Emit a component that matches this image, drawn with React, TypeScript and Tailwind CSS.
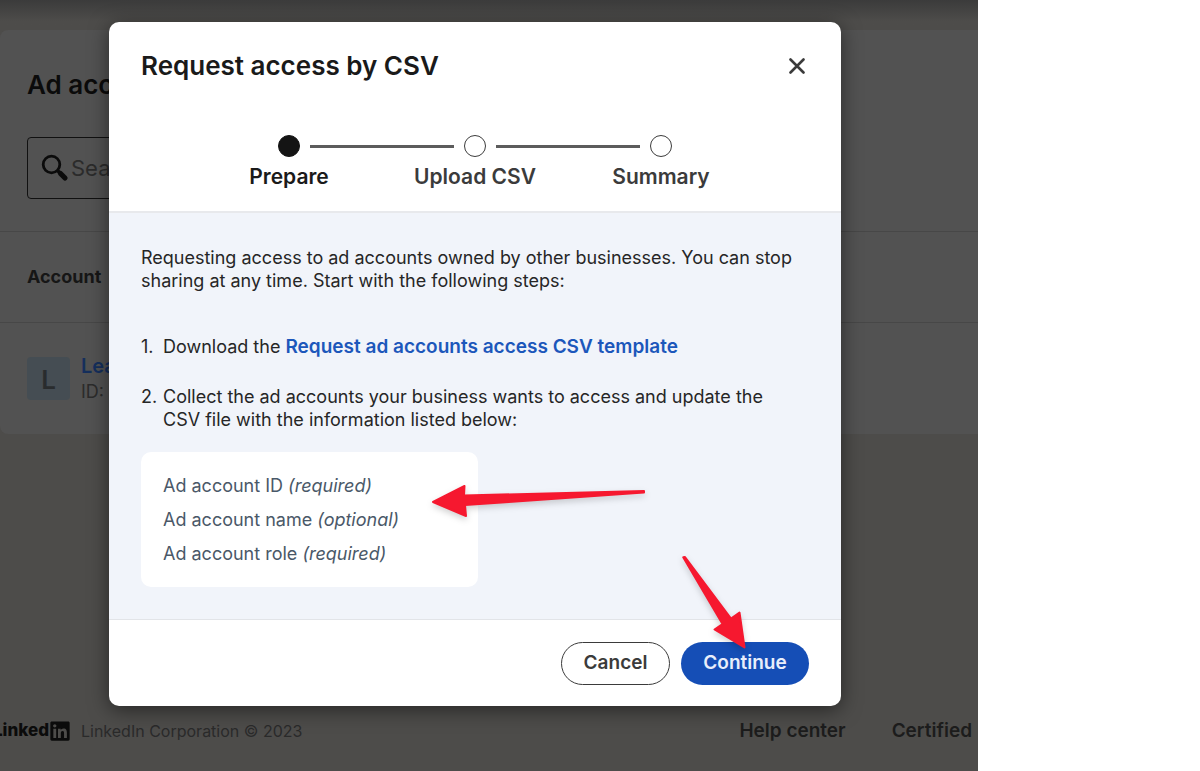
import { FaLinkedin } from 'react-icons/fa';

const STEPS = [
  { label: 'Prepare', active: true },
  { label: 'Upload CSV', active: false },
  { label: 'Summary', active: false },
];

const CSV_FIELDS = [
  { name: 'Ad account ID', note: '(required)' },
  { name: 'Ad account name', note: '(optional)' },
  { name: 'Ad account role', note: '(required)' },
];

function SearchIcon() {
  return (
    <svg className="h-7 w-7 shrink-0" viewBox="0 0 28 28" fill="none" stroke="#0b0b0b" strokeLinecap="round" aria-hidden="true">
      <circle cx="10.5" cy="10.5" r="8.3" strokeWidth="2.8" />
      <path d="M17 17l2 2" strokeWidth="3.5" />
      <path d="M19.5 19.5l4.5 4.5" strokeWidth="5.2" />
    </svg>
  );
}

function AccountsPage() {
  return (
    <div className="flex min-h-[771px] flex-col bg-[#4d4c4a]">
      <div className="h-[30px] bg-linear-to-b from-[#3b3b3b] to-[#4d4c4a] to-70%" />
      <section className="rounded-l-lg bg-[#525252]">
        <h1 className="px-[27px] pt-[39px] text-[26px]/8 font-semibold text-[#0b0b0b]">Ad acc</h1>
        <div className="mx-[27px] mt-9 flex h-[62px] w-80 items-center gap-0.5 rounded border border-[#111] pl-[13px]">
          <SearchIcon />
          <input
            type="text"
            aria-label="Search ad accounts"
            placeholder="Sea"
            className="w-full bg-transparent text-[22px] text-[#0b0b0b] outline-none placeholder:text-[#2b2b2b]"
          />
        </div>
        <table className="mt-8 w-full text-left">
          <thead>
            <tr className="h-[91px] border-y border-[#474747]">
              <th scope="col" className="pl-[27px] text-lg font-bold text-[#161616]">Account</th>
            </tr>
          </thead>
          <tbody>
            <tr className="h-[111px]">
              <td className="pl-[27px]">
                <div className="flex items-center gap-[11px]">
                  <span className="flex size-[43px] items-center justify-center rounded bg-[#454d53] pt-0.5 text-[26px] font-semibold text-[#292c2e]">L</span>
                  <div className="pt-0.5">
                    <a href="#account" className="block text-xl/[25px] font-semibold text-[#152f5c]">Lea</a>
                    <p className="text-lg/[25px] text-[#2b2b2b]">ID:</p>
                  </div>
                </div>
              </td>
            </tr>
          </tbody>
        </table>
      </section>
      <footer className="mt-auto flex h-20 items-center justify-between overflow-hidden">
        <div className="flex items-center">
          <span className="-ml-[7px] text-[17px] font-extrabold text-[#0b0b0b]">Linked</span>
          <FaLinkedin className="size-[22px] text-[#0b0b0b]" aria-hidden="true" />
          <span className="ml-2.5 text-base text-[#2a2a2a]">LinkedIn Corporation © 2023</span>
        </div>
        <nav className="mr-1.5 flex gap-[46px] text-[19px] font-semibold text-[#1c1c1c]">
          <a href="#help">Help center</a>
          <a href="#certified">Certified</a>
        </nav>
      </footer>
    </div>
  );
}

function Stepper() {
  return (
    <ol className="mx-auto mt-[49px] grid w-[558px] max-w-full grid-cols-3">
      {STEPS.map((step, i) => (
        <li key={step.label} className="text-center">
          <div className="flex items-center gap-2.5">
            <span className={`h-[3px] flex-1 ${i === 0 ? '' : 'bg-[#5c5c5c]'}`} />
            <span className={`size-[22px] rounded-full border ${step.active ? 'border-[#141414] bg-[#141414]' : 'border-[#3c3c3c]'}`} />
            <span className={`h-[3px] flex-1 ${i === STEPS.length - 1 ? '' : 'bg-[#5c5c5c]'}`} />
          </div>
          <p className={`mt-1.5 text-[21px]/7 font-semibold ${step.active ? 'text-[#1a1a1a]' : 'text-[#3b3b3b]'}`}>{step.label}</p>
        </li>
      ))}
    </ol>
  );
}

// Hand-drawn style pointers that sit on top of the dialog
function Arrows() {
  return (
    <svg
      className="pointer-events-none absolute top-[455px] left-[315px] h-[180px] w-[350px] drop-shadow-[0_3px_3px_rgba(0,0,0,0.18)]"
      viewBox="424 477 350 180"
      fill="#f6182f"
      stroke="#f6182f"
      strokeWidth="2"
      strokeLinejoin="round"
      aria-hidden="true"
    >
      <path d="M433 502L464.5 486L464 495.5L644 491L644 492.5L465 505L466 516Z" />
      <path d="M683.2 557.3L685 557L731 618.5L739.5 612.5L744.5 647.5L714.5 629.5L722.5 624Z" />
    </svg>
  );
}

function RequestAccessDialog() {
  return (
    <div
      role="dialog"
      aria-labelledby="dialog-title"
      className="relative w-[732px] overflow-hidden rounded-[10px] bg-white shadow-[0_4px_20px_rgba(0,0,0,0.5)]"
    >
      <header className="border-b-2 border-[#e8e9ec] pt-6 pb-5">
        <div className="flex items-center justify-between px-8">
          <h2 id="dialog-title" className="text-[26px]/10 font-semibold text-[#1a1a1a]">Request access by CSV</h2>
          <button type="button" aria-label="Close" className="p-1">
            <svg className="size-4" viewBox="0 0 16 16" fill="none" stroke="#3b3b3b" strokeWidth="2.6" strokeLinecap="round">
              <path d="M1.5 1.5l13 13M14.5 1.5l-13 13" />
            </svg>
          </button>
        </div>
        <Stepper />
      </header>

      <div className="bg-[#f1f4fa] px-8 pt-[33px] pb-8 text-lg/[23px] text-[#262626]">
        <p>
          Requesting access to ad accounts owned by other businesses. You can stop
          sharing at any time. Start with the following steps:
        </p>
        <ol className="mt-[43px]">
          <li className="flex">
            <span className="w-[22px] shrink-0">1.</span>
            <p>
              Download the{' '}
              <a href="#template" className="text-[19px]/[23px] font-semibold text-[#1c57bb]">Request ad accounts access CSV template</a>
            </p>
          </li>
          <li className="mt-[27px] flex pr-5">
            <span className="w-[22px] shrink-0">2.</span>
            <p>
              Collect the ad accounts your business wants to access and update the
              CSV file with the information listed below:
            </p>
          </li>
        </ol>
        <ul className="mt-[21px] w-[337px] space-y-[11px] rounded-[10px] bg-white px-[22px] py-[22px] text-[#4a5868]">
          {CSV_FIELDS.map((field) => (
            <li key={field.name}>
              {field.name} <em>{field.note}</em>
            </li>
          ))}
        </ul>
      </div>

      <footer className="flex justify-end gap-[11px] border-t border-[#e2e4e8] px-8 pt-[22px] pb-[21px] text-[19px] font-semibold">
        <button type="button" className="h-[43px] w-[109px] rounded-full border border-[#3b3b3b] text-[#3b3b3b]">Cancel</button>
        <button type="button" className="h-[43px] w-32 rounded-full bg-[#154eb6] text-[#e8eefb]">Continue</button>
      </footer>
      <Arrows />
    </div>
  );
}

export default function App() {
  return (
    <div className="flex bg-white font-['Inter',sans-serif]">
      <main className="relative min-w-0 flex-1 overflow-hidden">
        <AccountsPage />
        <div className="absolute inset-0 flex items-start justify-center pt-[22px] pr-7">
          <RequestAccessDialog />
        </div>
      </main>
      <div className="w-[222px] shrink-0" />
    </div>
  );
}
